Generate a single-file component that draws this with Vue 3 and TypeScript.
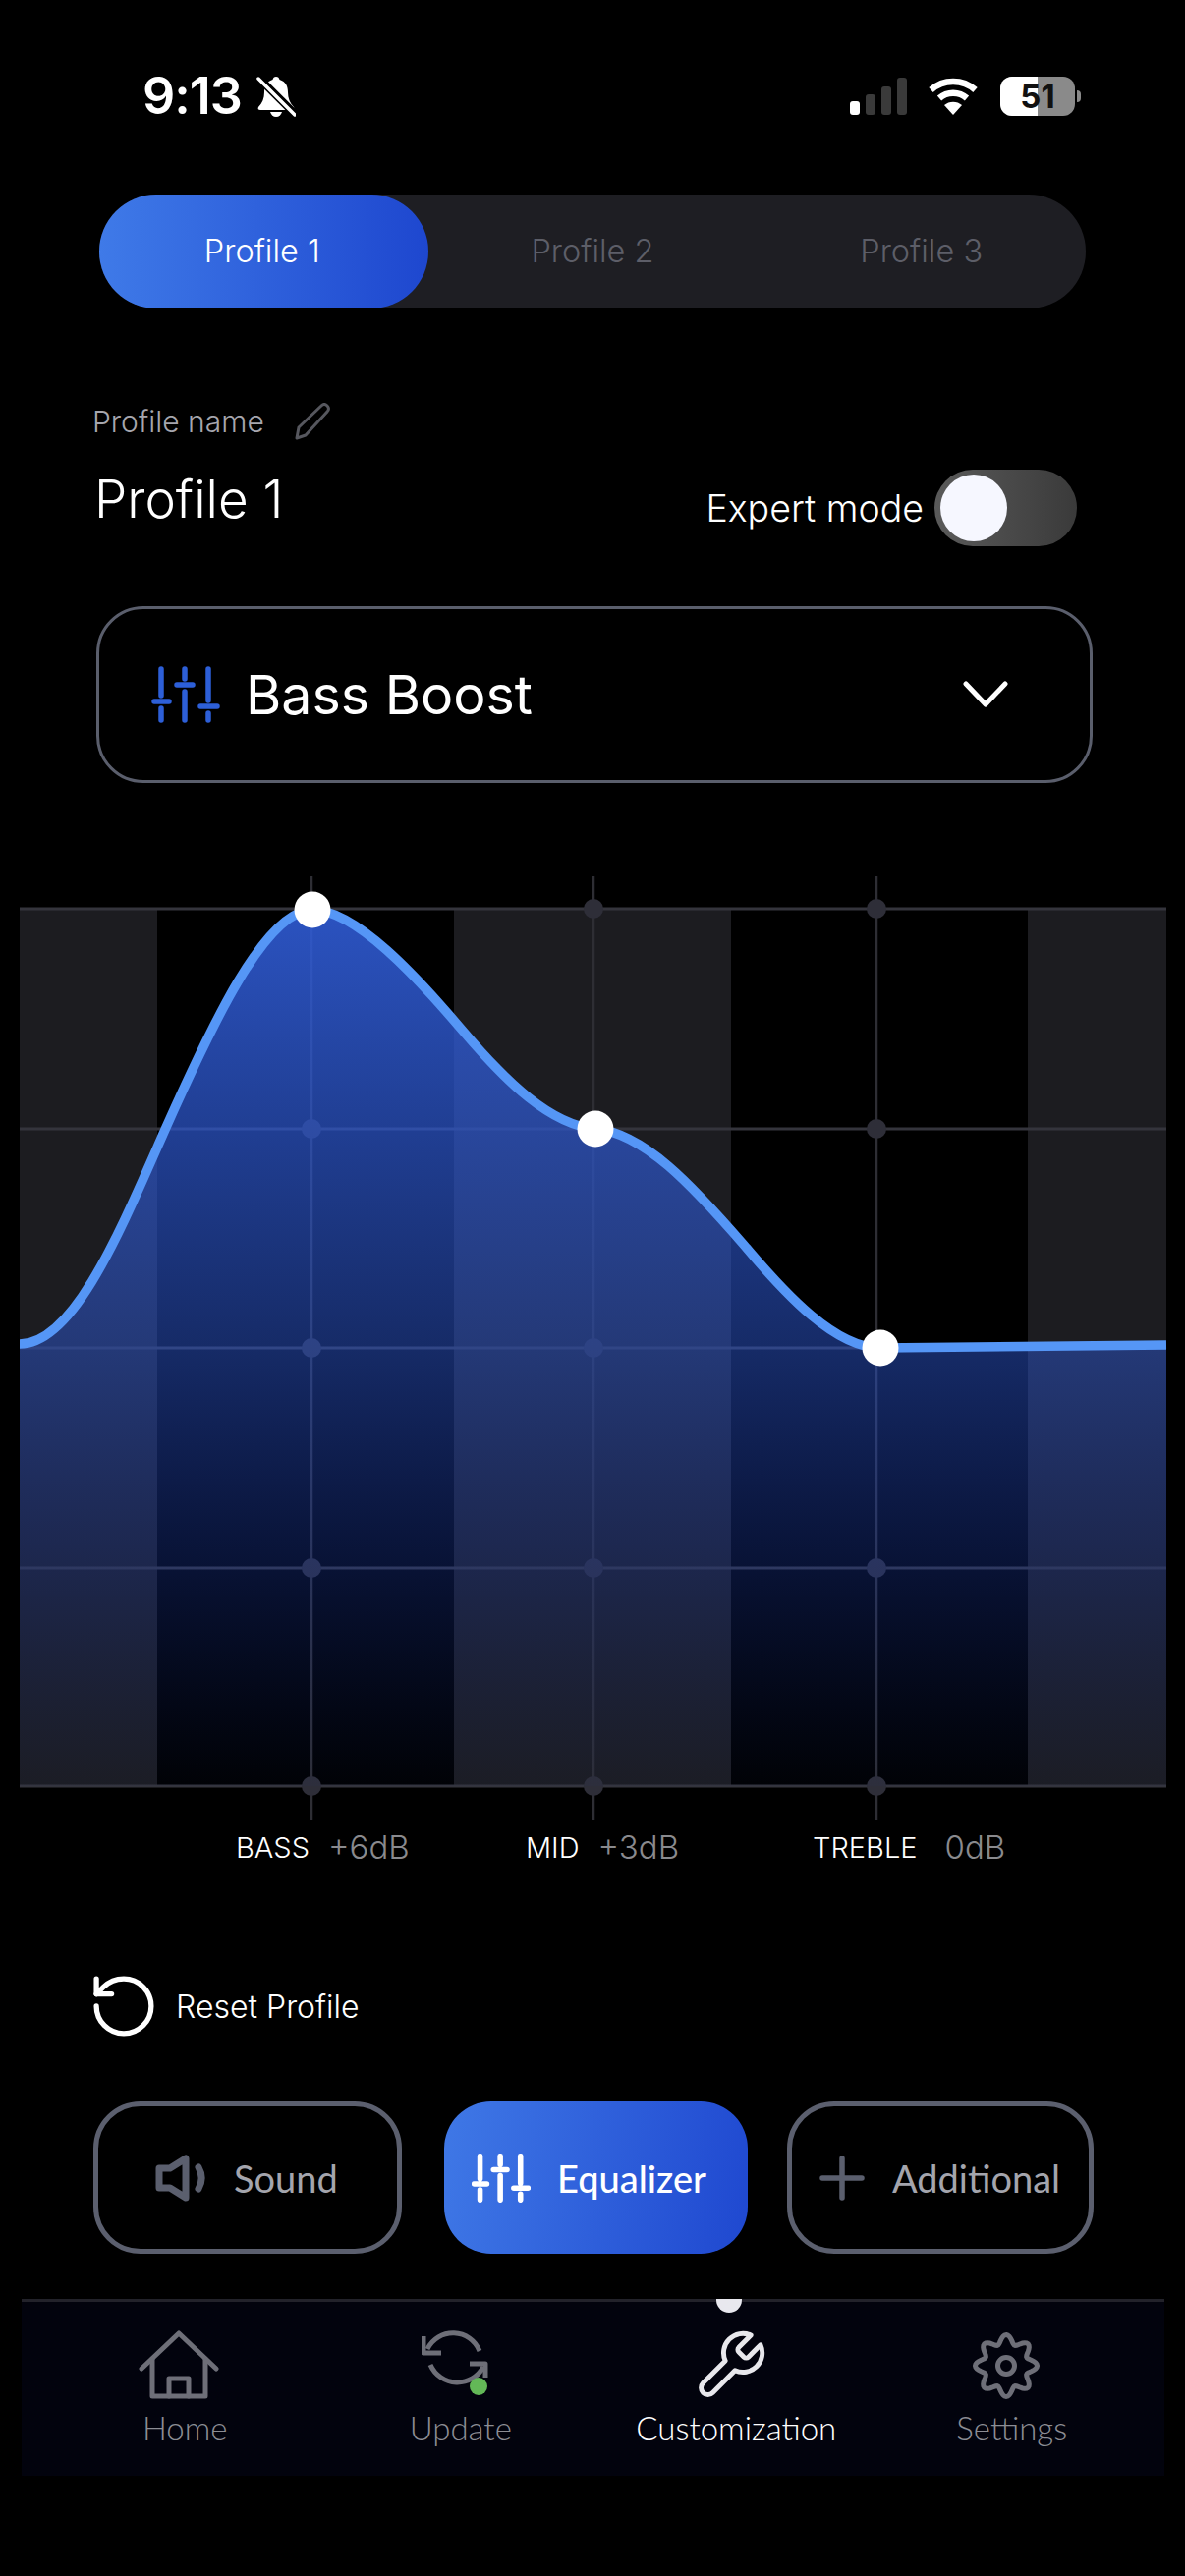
<template>
  <div class="page">
    <div class="status">
      <div class="status_left">
        <span class="time">9:13</span>
        <svg class="bell" width="40" height="42" viewBox="0 0 40 42">
          <path d="M20 1c-2 0-3 1-3.500 3C10 6 8 11 8 17c0 6-2 11-6 15-1 2 0 3 2 3h32c2 0 3-1 2-3-4-4-6-9-6-15 0-6-2-11-8.500-13C23 2 22 1 20 1zM14 37c1 3 3 5 6 5s5-2 6-5z" fill="#fff" />
          <path d="M1 1l38 38" stroke="#000" stroke-width="8" />
          <path d="M2 3l37 37" stroke="#fff" stroke-width="3.500" stroke-linecap="round" />
        </svg>
      </div>
      <div class="status_right">
        <svg width="58" height="38" viewBox="0 0 58 38">
          <rect x="0" y="24" width="10" height="14" rx="3" fill="#fff" />
          <rect x="16" y="17" width="10" height="21" rx="3" fill="#3a3a3a" />
          <rect x="32" y="9" width="10" height="29" rx="3" fill="#3a3a3a" />
          <rect x="48" y="0" width="10" height="38" rx="3" fill="#3a3a3a" />
        </svg>
        <svg class="wifi" width="50" height="38" viewBox="0 0 50 38">
          <path d="M2.500 12.500C15 1 35 1 47.500 12.500" fill="none" stroke="#fff" stroke-width="6.500" />
          <path d="M11 21c8-7 20-7 28 0" fill="none" stroke="#fff" stroke-width="6.500" />
          <path d="M16 28c5-4.500 13-4.500 18 0l-9 10z" fill="#fff" />
        </svg>
        <div class="battery">
          <div class="battery_fill"></div>
          <span class="battery_text">51</span>
        </div>
        <div class="battery_nub"></div>
      </div>
    </div>

    <div class="segments">
      <div
        v-for="(p, i) in profiles"
        :key="p"
        class="segment"
        :class="{ segment_active: i === 0 }"
      >
        {{ p }}
      </div>
    </div>

    <div class="profile">
      <div class="profile_left">
        <div class="profile_label">
          <span>Profile name</span>
          <svg width="38" height="38" viewBox="0 0 38 38" fill="none" stroke="#56575e" stroke-width="3">
            <path d="M3 36l2-11L28 3c2-2 4-2 6 0s2 4 0 6L12 33z" stroke-linejoin="round" />
          </svg>
        </div>
        <div class="profile_title">Profile 1</div>
      </div>
      <div class="expert">
        <span>Expert mode</span>
        <div class="toggle"><div class="toggle_knob"></div></div>
      </div>
    </div>

    <div class="dropdown">
      <svg class="dropdown_icon" width="70" height="58" viewBox="0 0 70 58" fill="none" stroke="#2d5fd8" stroke-width="5.500" stroke-linecap="round">
        <path :d="eqPath" />
      </svg>
      <span class="dropdown_text">Bass Boost</span>
      <svg class="chevron" width="46" height="28" viewBox="0 0 46 28" fill="none" stroke="#fff" stroke-width="5">
        <path d="M3 3l20 21L43 3" stroke-linecap="round" stroke-linejoin="round" />
      </svg>
    </div>

    <svg class="chart" width="1206" height="962" viewBox="0 892 1206 962">
      <defs>
        <linearGradient id="fillGrad" gradientUnits="userSpaceOnUse" x1="0" y1="926" x2="0" y2="1818">
          <stop offset="0" stop-color="rgb(48,92,214)" stop-opacity="0.9" />
          <stop offset="0.5" stop-color="rgb(44,86,206)" stop-opacity="0.5" />
          <stop offset="0.75" stop-color="rgb(30,66,190)" stop-opacity="0.28" />
          <stop offset="1" stop-color="rgb(20,50,160)" stop-opacity="0.04" />
        </linearGradient>
      </defs>
      <rect v-for="s in stripes" :key="s[0]" :x="s[0]" y="925" :width="s[1]" height="893" fill="#1c1c20" />
      <line v-for="y in rows" :key="y" x1="20" x2="1187" :y1="y" :y2="y" stroke="#34343c" stroke-width="3" />
      <line v-for="x in cols" :key="x" :x1="x" :x2="x" y1="892" y2="1853" stroke="#2e2e34" stroke-width="2.500" />
      <template v-for="x in cols" :key="x">
        <circle v-for="y in rows" :key="y" :cx="x" :cy="y" r="10" fill="#2e2e38" />
      </template>
      <path :d="areaPath" fill="url(#fillGrad)" />
      <path :d="curvePath" fill="none" stroke="#5596f6" stroke-width="9.500" />
      <circle cx="318" cy="926" r="18.500" fill="#fff" />
      <circle cx="606" cy="1149" r="18.500" fill="#fff" />
      <circle cx="896" cy="1372" r="18.500" fill="#fff" />
    </svg>

    <div class="bands">
      <div v-for="b in bands" :key="b.name" class="band">
        <span class="band_name">{{ b.name }}</span>
        <span class="band_value">{{ b.value }}</span>
      </div>
    </div>

    <div class="reset">
      <svg width="62" height="62" viewBox="2 2 20 20" fill="none" stroke="#fff" stroke-width="1.700" stroke-linecap="round" stroke-linejoin="round">
        <path d="M3 12a9 9 0 1 0 9-9 9.750 9.750 0 0 0-6.740 2.740L3 8" />
        <path d="M3 3v5h5" />
      </svg>
      <span>Reset Profile</span>
    </div>

    <div class="tabs">
      <div class="tab">
        <svg width="52" height="48" viewBox="0 0 52 48" fill="none" stroke="#5b5f6e" stroke-width="7" stroke-linejoin="round" stroke-linecap="round">
          <path d="M4 14h11L31 4v40L15 34H4z" />
          <path d="M44 13c4 7 4 15 0 22" />
        </svg>
        <span>Sound</span>
      </div>
      <div class="tab tab_active">
        <svg width="60" height="50" viewBox="0 0 70 58" fill="none" stroke="#fff" stroke-width="6.500" stroke-linecap="round">
          <path :d="eqPath" />
        </svg>
        <span>Equalizer</span>
      </div>
      <div class="tab tab_add">
        <svg width="46" height="46" viewBox="0 0 46 46" fill="none" stroke="#5b5f6e" stroke-width="5.500" stroke-linecap="round">
          <path d="M23 3v40M3 23h40" />
        </svg>
        <span>Additional</span>
      </div>
    </div>

    <div class="nav">
      <div class="nav_dot"></div>
      <div class="nav_item">
        <svg class="nav_svg" width="84" height="72" viewBox="0 0 84 72" fill="none" stroke="#6e6f78" stroke-width="5" stroke-linejoin="round" stroke-linecap="round">
          <path d="M4 39L42 3l38 36" />
          <path d="M15 29v38h54V29" />
          <path d="M32 67V49h20v18" />
        </svg>
        <span>Home</span>
      </div>
      <div class="nav_item">
        <svg class="nav_svg" width="68" height="72" viewBox="0 0 68 72" fill="none" stroke="#6e6f78" stroke-width="5" stroke-linejoin="round">
          <path d="M2 6v17h18" />
          <path d="M6 19A29 29 0 0 1 59 21" />
          <path d="M49 34h16v14" />
          <path d="M63 37A30 30 0 0 1 9 35" />
          <circle cx="58" cy="57" r="9" fill="#63b857" stroke="none" />
        </svg>
        <span>Update</span>
      </div>
      <div class="nav_item nav_item_active">
        <svg class="nav_svg" width="72" height="72" viewBox="1 1 22 22" fill="none" stroke="#e8e8ec" stroke-width="1.500" stroke-linecap="round" stroke-linejoin="round">
          <path d="M14.700 6.300a1 1 0 0 0 0 1.400l1.600 1.600a1 1 0 0 0 1.400 0l3.770-3.770a6 6 0 0 1-7.940 7.940l-6.910 6.910a2.120 2.120 0 0 1-3-3l6.910-6.910a6 6 0 0 1 7.940-7.940l-3.760 3.760z" />
        </svg>
        <span>Customization</span>
      </div>
      <div class="nav_item">
        <svg class="nav_svg" width="72" height="72" viewBox="-36 -36 72 72" fill="none" stroke="#6e6f78" stroke-width="5">
          <path :d="gearPath" />
          <circle r="8.500" />
        </svg>
        <span>Settings</span>
      </div>
    </div>
  </div>
</template>

<script setup lang="ts">
const profiles = ['Profile 1', 'Profile 2', 'Profile 3'];
const stripes = [[20, 140], [462, 282], [1046, 141]];
const rows = [925, 1149, 1372, 1596, 1818];
const cols = [317, 604, 892];
const bands = [
  { name: 'BASS', value: '+6dB' },
  { name: 'MID', value: '+3dB' },
  { name: 'TREBLE', value: '0dB' },
];

const eqPath =
  'M10 3v27M10 43v12M3 36h15M34 3v10M34 26v29M26 19h16M58 3v32M58 48v7M50 41h17';

const curvePath =
  'M20 1368C75 1368 122 1254 167 1152C215 1044 270 926 318 926C362 926 425 995 470 1048' +
  'C515 1101 560 1145 606 1149C655 1153 705 1207 757 1267C800 1318 850 1372 896 1372L1187 1369';
const areaPath = `${curvePath}L1187 1818L20 1818Z`;

function gear(): string {
  const out: string[] = [];
  for (let a = 0; a < 360; a += 3) {
    const t = (a * Math.PI) / 180;
    const r = 27 + 4.5 * Math.cos(8 * t);
    out.push(`${(r * Math.sin(t)).toFixed(2)} ${(-r * Math.cos(t)).toFixed(2)}`);
  }
  return `M${out.join('L')}Z`;
}
const gearPath = gear();
</script>

<style scoped>
.page {
  position: relative;
  width: 1206px;
  height: 2622px;
  background: #000;
  color: #fff;
  font-family: Inter, 'Liberation Sans', sans-serif;
  display: flex;
  flex-direction: column;
  overflow: hidden;
}

.status {
  display: flex;
  justify-content: space-between;
  align-items: center;
  height: 42px;
  margin-top: 77px;
  padding: 0 106px 0 145px;
}

.status_left {
  display: flex;
  align-items: center;
  gap: 15px;
}

.time {
  font-size: 52px;
  font-weight: 600;
  letter-spacing: -1px;
  line-height: 42px;
}

.status_right {
  display: flex;
  align-items: center;
  position: relative;
}

.wifi {
  margin-left: 22px;
}

.battery {
  position: relative;
  width: 76px;
  height: 40px;
  margin-left: 23px;
  border-radius: 12px;
  background: #8a8a8a;
  overflow: hidden;
  display: flex;
  align-items: center;
  justify-content: center;
}

.battery_fill {
  position: absolute;
  left: 0;
  top: 0;
  bottom: 0;
  width: 38px;
  background: #fff;
}

.battery_text {
  position: relative;
  color: #111;
  font-size: 33px;
  font-weight: 700;
  line-height: 40px;
}

.battery_nub {
  width: 4px;
  height: 12px;
  margin-left: 2px;
  background: #8a8a8a;
  border-radius: 0 4px 4px 0;
}

.segments {
  display: grid;
  grid-template-columns: repeat(3, 1fr);
  height: 116px;
  margin: 79px 101px 0;
  background: #1e1e23;
  border-radius: 58px;
}

.segment {
  display: flex;
  align-items: center;
  justify-content: center;
  padding-bottom: 2px;
  font-size: 32.500px;
  font-weight: 300;
  color: #5d5e68;
  border-radius: 58px;
}

.segment_active {
  padding-right: 3px;
  color: #fff;
  background: linear-gradient(90deg, #3f7ae8, #1e47cf);
}

.profile {
  display: flex;
  justify-content: space-between;
  align-items: flex-end;
  height: 148px;
  margin-top: 94px;
  padding: 0 110px 0 94px;
}

.profile_left {
  display: flex;
  flex-direction: column;
  align-self: flex-start;
}

.profile_label {
  display: flex;
  align-items: center;
  gap: 30px;
  height: 38px;
  padding-top: 2px;
  font-size: 30px;
  font-weight: 300;
  color: #a6a6ae;
}

.profile_title {
  margin: 30px 0 0 2px;
  font-size: 53px;
  line-height: 60px;
  font-weight: 300;
}

.expert {
  display: flex;
  align-items: center;
  gap: 11px;
  font-size: 37.500px;
  font-weight: 300;
}

.toggle {
  width: 145px;
  height: 78px;
  padding: 5px 6px;
  box-sizing: border-box;
  border-radius: 39px;
  background: linear-gradient(90deg, #5a5a5a, #3a3a3a);
}

.toggle_knob {
  width: 68px;
  height: 68px;
  border-radius: 50%;
  background: #f6f7ff;
}

.dropdown {
  display: flex;
  align-items: center;
  height: 180px;
  box-sizing: border-box;
  margin: 61px 94px 0 98px;
  padding: 0 83px 0 53px;
  border: 3px solid #5a5e6c;
  border-radius: 48px;
}

.dropdown_text {
  margin-left: 26px;
  padding-bottom: 2px;
  font-size: 55.500px;
  font-weight: 400;
}

.chevron {
  margin-left: auto;
}

.chart {
  display: block;
  margin-top: 95px;
}

.bands {
  display: grid;
  grid-template-columns: 295px 292px auto;
  height: 40px;
  margin-top: 6px;
  padding-left: 240px;
  font-weight: 300;
}

.band {
  display: flex;
  align-items: center;
  gap: 19px;
}

.band:last-child {
  gap: 28px;
}

.band_name {
  font-size: 29px;
}

.band_value {
  font-size: 33px;
  color: #8a8a8e;
}

.reset {
  display: flex;
  align-items: center;
  gap: 22px;
  height: 66px;
  margin-top: 109px;
  padding-left: 95px;
  font-size: 32px;
  font-weight: 300;
}

.tabs {
  display: grid;
  grid-template-columns: 314px 312px 312px;
  justify-content: space-between;
  height: 155px;
  margin: 64px 93px 0 95px;
}

.tab {
  display: flex;
  align-items: center;
  gap: 28px;
  padding-left: 58px;
  box-sizing: border-box;
  border: 5px solid #5b5f6e;
  border-radius: 48px;
  color: #a4a5ad;
  font-family: Lato, sans-serif;
  font-size: 38px;
}

.tab_active {
  gap: 27px;
  margin-left: 3px;
  padding-left: 28px;
  border: 0;
  color: #fff;
  font-weight: 500;
  background: linear-gradient(100deg, #3f78e6, #1f48d0);
}

.tab_add {
  padding-left: 28px;
}

.nav {
  position: relative;
  display: grid;
  grid-template-columns: repeat(4, 280.500px);
  height: 180px;
  box-sizing: border-box;
  margin: 46px 21px 0 22px;
  padding: 29px 0 0 26px;
  background: #02030d;
  border-top: 3px solid #22222a;
}

.nav_dot {
  position: absolute;
  top: -3px;
  left: 707px;
  width: 26px;
  height: 14px;
  background: #e8e8ee;
  border-radius: 0 0 13px 13px;
}

.nav_item {
  display: flex;
  flex-direction: column;
  align-items: center;
  color: #8c8d94;
  font-family: Lato, sans-serif;
  font-size: 33px;
  font-weight: 300;
  gap: 7px;
}

.nav_item_active {
  color: #fff;
}

.nav_svg {
  margin-right: 12px;
}
</style>

<style>
html,
body {
  background: #000;
}
</style>
